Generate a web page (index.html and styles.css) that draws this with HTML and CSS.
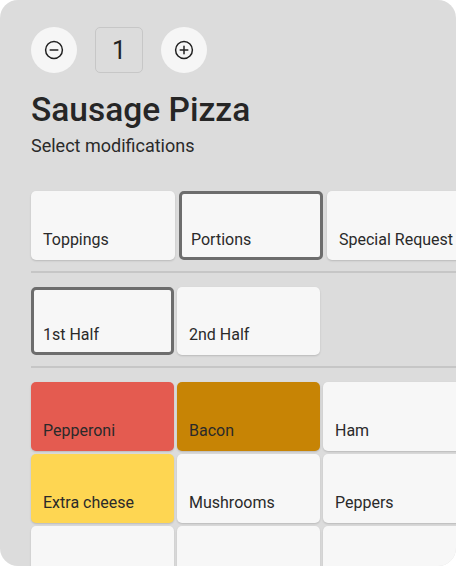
FILE: index.html
```html
<!DOCTYPE html>
<html lang="en">
<head>
<meta charset="utf-8">
<title>Sausage Pizza</title>
<link rel="stylesheet" href="styles.css">
</head>
<body>
<div class="panel">
  <div class="qty-row">
    <button class="circle-btn" aria-label="Decrease">
      <svg width="20" height="20" viewBox="0 0 20 20"><circle cx="10" cy="10" r="8.4" fill="none" stroke="#222" stroke-width="1.5"/><path d="M6.2 10h7.6" stroke="#222" stroke-width="1.5" stroke-linecap="round"/></svg>
    </button>
    <div class="qty-box">1</div>
    <button class="circle-btn" aria-label="Increase">
      <svg width="20" height="20" viewBox="0 0 20 20"><circle cx="10" cy="10" r="8.4" fill="none" stroke="#222" stroke-width="1.5"/><path d="M6.2 10h7.6M10 6.2v7.6" stroke="#222" stroke-width="1.5" stroke-linecap="round"/></svg>
    </button>
  </div>
  <h1 class="title">Sausage Pizza</h1>
  <p class="subtitle">Select modifications</p>

  <div class="grid grid-cats">
    <div class="tile">Toppings</div>
    <div class="tile selected">Portions</div>
    <div class="tile">Special Request</div>
  </div>
  <div class="divider"></div>
  <div class="grid grid-items halves">
    <div class="tile selected">1st Half</div>
    <div class="tile">2nd Half</div>
  </div>
  <div class="divider"></div>
  <div class="grid grid-items mods">
    <div class="tile red">Pepperoni</div>
    <div class="tile amber">Bacon</div>
    <div class="tile">Ham</div>
    <div class="tile yellow">Extra cheese</div>
    <div class="tile">Mushrooms</div>
    <div class="tile">Peppers</div>
    <div class="tile"></div>
    <div class="tile"></div>
    <div class="tile"></div>
  </div>
</div>
</body>
</html>
```

FILE: styles.css
```css
html, body {
  margin: 0;
  padding: 0;
  background: #ffffff;
}
body {
  font-family: Roboto, "Liberation Sans", Arial, sans-serif;
  color: #262626;
}
.panel {
  width: 456px;
  height: 566px;
  box-sizing: border-box;
  background: #dcdcdc;
  border-radius: 18px;
  overflow: hidden;
  padding: 27px 0 0 31px;
}
.qty-row {
  display: flex;
  align-items: center;
  gap: 18px;
}
.circle-btn {
  width: 46px;
  height: 46px;
  border-radius: 50%;
  border: none;
  background: #f6f6f6;
  padding: 0;
  display: flex;
  align-items: center;
  justify-content: center;
}
.qty-box {
  width: 48px;
  height: 46px;
  box-sizing: border-box;
  border: 1.5px solid #c7c7c7;
  border-radius: 5px;
  display: flex;
  align-items: center;
  justify-content: center;
  font-size: 25px;
  color: #222;
}
.title {
  margin: 17px 0 0;
  font-size: 33.5px;
  line-height: 40px;
  font-weight: 500;
  color: #262626;
}
.subtitle {
  margin: 5px 0 0;
  font-size: 18px;
  line-height: 21px;
  color: #2a2a2a;
}
.grid {
  display: grid;
  width: max-content;
}
.grid-cats {
  margin-top: 35px;
  grid-template-columns: repeat(3, 144px);
  column-gap: 4px;
}
.grid-items {
  grid-template-columns: repeat(3, 143px);
  column-gap: 3px;
  row-gap: 3px;
}
.tile {
  height: 69px;
  box-sizing: border-box;
  background: #f7f7f7;
  border-radius: 5px;
  display: flex;
  align-items: flex-end;
  padding: 0 12px 11px;
  font-size: 16px;
  line-height: 19px;
  color: #2a2a2a;
  white-space: nowrap;
  box-shadow: 0 1px 2px rgba(0, 0, 0, 0.16);
}
.tile.selected {
  border: 3px solid #6d6d6d;
  padding: 0 9px 8px;
  box-shadow: none;
}
.halves .tile {
  height: 68px;
}
.tile.red { background: #e45b50; }
.tile.amber { background: #c78405; }
.tile.yellow { background: #fed652; }
.divider {
  height: 2px;
  width: 460px;
  background: #c6c6c6;
  margin: 11px 0 14px;
}
```
